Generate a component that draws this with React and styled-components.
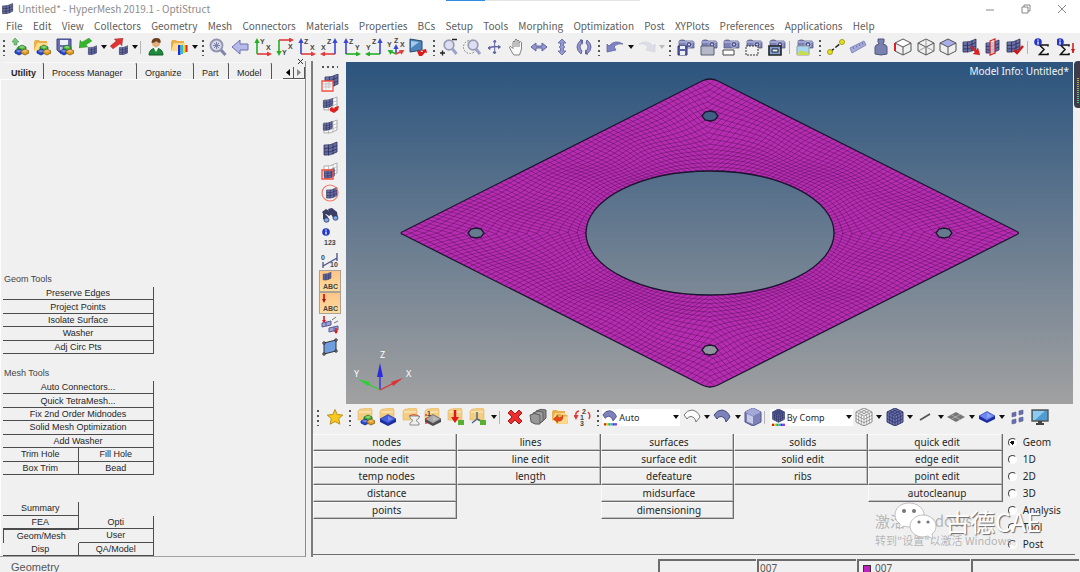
import React from "react";
import styled, { createGlobalStyle, css } from "styled-components";

const ui = '"Noto Sans", "Noto Sans CJK SC", sans-serif';
const windowFont = '"Noto Sans CJK SC", "Noto Sans", sans-serif';
const small = '"Liberation Sans", sans-serif';

const Global = createGlobalStyle`
  *, *::before, *::after { box-sizing: border-box; }
  body { margin: 0; background: #f0f0f0; color: #262626; font-family: ${ui}; font-size: 10px; }
  button, select, input { font: inherit; color: inherit; margin: 0; padding: 0; border: 0; background: none; }
`;

/* ---------- window frame ---------- */

const Window = styled.div`
  min-height: 100vh;
  display: flex;
  flex-direction: column;
  overflow: hidden;
`;
const TitleBar = styled.header`
  position: relative;
  display: flex;
  align-items: center;
  height: 17px;
  padding: 0 9px 0 1px;
  gap: 3px;
  background: #fff;
  color: #8c8c8c;
  font: 10px/17px ${windowFont};
`;
const Title = styled.h1`
  flex: 1;
  margin: 0;
  font: inherit;
`;
const Progress = styled.div`
  position: absolute;
  top: 0;
  left: 41.3%;
  width: 18%;
  height: 1px;
  background: linear-gradient(90deg, #2f8be0 20%, #e4e4e4 20%);
`;
const WindowButtons = styled.div`
  display: flex;
  gap: 18px;
`;
const WindowButton = styled.button`
  width: 18px;
  height: 14px;
  display: grid;
  place-items: center;
`;
const MenuBar = styled.nav`
  display: flex;
  justify-content: space-between;
  height: 16px;
  padding: 0 19% 0 6px;
  background: #fff;
  font: 10px/17px ${windowFont};
`;
const MenuLink = styled.a`
  color: #5c5c5c;
  text-decoration: none;
  white-space: nowrap;
`;

/* ---------- toolbars ---------- */

const TopTools = styled.div`
  display: grid;
  grid-template-columns: 199fr 231fr 166fr 71fr 150fr 261fr;
  height: 28px;
  padding-right: 3px;
`;
const BottomTools = styled.div`
  display: grid;
  grid-template-columns: 32fr 248fr 457fr 29fr;
  height: 26px;
  padding-left: 1px;
`;
const Group = styled.div`
  display: flex;
  align-items: center;
  justify-content: space-between;
  min-width: 0;
`;
const Grip = styled.i`
  width: 8px;
  height: 17px;
  flex: none;
  background: radial-gradient(circle at 4px 2px, #555 1px, transparent 1px) 0 0 / 8px 5px;
`;
const Sep = styled.i`
  width: 5px;
  height: 13px;
  flex: none;
  border-left: 1px solid #b4b4b4;
`;
const ToolButton = styled.button`
  width: 22px;
  height: 22px;
  flex: none;
  display: grid;
  place-items: center;
  ${(p) => p.$on && css`
    background: linear-gradient(#ffc489, #ffdc9c);
    border: 1px solid #a9a294;
  `}
`;
const CaretButton = styled.button`
  width: 8px;
  height: 18px;
  flex: none;
  display: grid;
  place-items: center;
`;
const Combo = styled.label`
  display: flex;
  align-items: center;
  width: ${(p) => p.$w}px;
  height: 17px;
  background: #fff;
  font: 10px/17px ${ui};
`;
const ComboSelect = styled.select`
  flex: 1;
  min-width: 0;
  height: 17px;
  appearance: none;
  font-size: 9px;
`;

/* ---------- work area ---------- */

const Work = styled.div`
  flex: 1;
  display: grid;
  grid-template-columns: 306px minmax(0, 1fr);
  column-gap: 5px;
`;
const Browser = styled.aside`
  display: flex;
  flex-direction: column;
  border-right: 1px solid #8a8a8a;
  border-bottom: 1px solid #a0a0a0;
`;
const TabRow = styled.div`
  position: relative;
  display: flex;
  align-items: flex-end;
  height: 18px;
  padding-left: 3px;
`;
const Tab = styled.button`
  width: ${(p) => p.$w}px;
  height: 17px;
  padding: 2px 0 0 8px;
  border-top: 1px solid #fafafa;
  border-right: 1px solid #555;
  border-top-right-radius: 3px;
  font: ${(p) => (p.$active ? "bold 9px" : "9px")}/16px ${small};
  text-align: left;
  white-space: nowrap;
`;
const TabScroll = styled.div`
  display: flex;
  margin-left: auto;
  align-self: flex-end;
`;
const ScrollButton = styled.button`
  width: 11px;
  height: 12px;
  display: grid;
  place-items: center;
  border-right: 1px solid #555;
  border-bottom: 1px solid #555;
`;
const CloseTab = styled.button`
  position: absolute;
  top: -4px;
  right: 0;
  width: 9px;
  height: 9px;
  display: grid;
  place-items: center;
`;
const TabBody = styled.div`
  flex: 1;
  display: flex;
  flex-direction: column;
  justify-content: flex-end;
  padding: 0 4px 0 2px;
  border-top: 1px solid #fdfdfd;
  border-left: 1px solid #fdfdfd;
`;
const GroupName = styled.h2`
  height: 14px;
  margin: 0 0 0 1px;
  color: #444;
  font: 9px/13px ${small};
`;
const MacroGrid = styled.div`
  display: grid;
  grid-template-columns: 1fr 1fr;
  grid-auto-rows: 1fr;
  width: 151px;
  height: ${(p) => p.$h}px;
  margin-bottom: ${(p) => p.$gap}px;
`;
const Macro = styled.button`
  grid-column: ${(p) => (p.$wide ? "1 / -1" : p.$first ? "1" : "auto")};
  min-height: 0;
  overflow: hidden;
  font: 9px/12px ${small};
  border-right: 1px solid #4c4c4c;
  border-bottom: 1px solid #4c4c4c;
  ${(p) => p.$pressed && css`
    border: 0;
    border-top: 1px solid #4c4c4c;
    border-left: 1px solid #4c4c4c;
  `}
`;

const Stage = styled.main`
  display: flex;
  flex-direction: column;
  min-width: 0;
  border-left: 2px solid #7c7c7c;
`;
const Scene = styled.div`
  position: relative;
  flex: 1;
  display: grid;
  grid-template-columns: 33px minmax(0, 1fr) 7px;
`;
const SideTools = styled.div`
  display: flex;
  flex-direction: column;
  align-items: center;
  padding-top: 4px;
`;
const SideGrip = styled.i`
  width: 17px;
  height: 7px;
  background: radial-gradient(circle at 2px 2px, #555 1px, transparent 1px) 0 0 / 5px 7px;
`;
const Canvas = styled.div`
  position: relative;
  margin-top: 1px;
  background: linear-gradient(#2c547e, #a1a1a1);
`;
const ModelInfo = styled.p`
  position: absolute;
  top: 2px;
  right: 4px;
  margin: 0;
  color: #f2f5f8;
  font: 10px/14px ${ui};
`;
const Drawing = styled.svg`
  display: block;
  width: 100%;
  height: 100%;
`;
const Meter = styled.i`
  position: absolute;
  top: 0;
  right: 0;
  width: 6px;
  height: 47px;
  border: solid #3c3c4a;
  border-width: 17px 1px 4px 3px;
  border-radius: 4px 0 0 4px;
  background: repeating-linear-gradient(transparent 0 1px, #3c3c4a 1px 2px), linear-gradient(#c8b23c, #3cc8a0);
`;

/* ---------- command panel ---------- */

const Panel = styled.section`
  position: relative;
  display: grid;
  grid-template-columns: 144fr 143fr 133fr 134fr 134fr 72fr;
  align-items: start;
  margin: 4px 5px 2px 0;
  padding-bottom: 1px;
  border-bottom: 1px solid #6e6e6e;
`;
const Column = styled.div`
  display: grid;
  grid-auto-rows: 17px;
`;
const Command = styled.button`
  padding-left: 3px;
  border-right: 1px solid #6c6c6c;
  border-bottom: 1px solid #6c6c6c;
  border-left: 1px solid #fafafa;
  box-shadow: inset -1px -1px #c0c0c0, inset 0 1px #fafafa;
  font: 10px/15px ${ui};
`;
const Modes = styled.fieldset`
  display: grid;
  grid-auto-rows: 17px;
  min-width: 0;
  margin: 0;
  padding: 0 0 0 5px;
  border: 0;
`;
const Mode = styled.label`
  display: flex;
  align-items: center;
  gap: 6px;
  font: 10px/15px ${ui};
`;
const Radio = styled.input`
  appearance: none;
  width: 9px;
  height: 9px;
  border-radius: 50%;
  border: 1px solid #fff;
  border-top-color: #444;
  border-left-color: #444;
  background: #fff;
  &:checked { background: radial-gradient(circle, #111 2px, #fff 2px); }
`;
const Watermark = styled.div`
  position: absolute;
  right: 0;
  bottom: 4px;
  width: 200px;
  height: 40px;
  pointer-events: none;
  color: rgba(120, 120, 120, 0.5);
  white-space: nowrap;
`;
const Activate = styled.p`
  margin: 0;
  font: 15px/22px ${windowFont};
`;
const ActivateHint = styled.p`
  margin: 0;
  font: 11px/16px ${windowFont};
`;
const Brand = styled.div`
  position: absolute;
  left: 18px;
  top: -9px;
  display: flex;
  align-items: center;
  gap: 8px;
  color: #fff;
  font: 25px/40px ${windowFont};
  text-shadow: 1px 1px 1px #666;
`;

const StatusBar = styled.footer`
  display: grid;
  grid-template-columns: 658fr 99fr 100fr 114fr 109fr;
  height: 15px;
  padding-top: 2px;
  overflow: hidden;
  color: #555;
`;
const StatusText = styled.span`
  padding-left: 11px;
  font: 11px/17px ${small};
`;
const StatusCell = styled.span`
  display: flex;
  align-items: center;
  gap: 4px;
  padding-left: ${(p) => (p.$chip ? 4 : 1)}px;
  margin-right: 1px;
  border: solid #6c6c6c;
  border-width: 2px 0 0 2px;
  font: 10px/11px ${ui};
`;
const Chip = styled.i`
  width: 8px;
  height: 8px;
  border: 1px solid #333;
  background: #c020c0;
`;

/* ---------- icon pieces ---------- */

const Icon = ({ children, size = 18 }) => (
  <svg width={size} height={size} viewBox="0 0 18 18" aria-hidden="true">{children}</svg>
);
const Caret = ({ faint }) => (
  <svg width="6" height="4" viewBox="0 0 6 4" aria-hidden="true"><path d="M0 0h6L3 4z" fill={faint ? "#bbb" : "#111"} /></svg>
);
const Gem = ({ x, y, c, d }) => (
  <g transform={`translate(${x} ${y})`}>
    <path d="M0-3 4-1V1L0 3-4 1V-1z" fill={c} stroke={d} strokeWidth=".7" />
    <path d="M0-2.6 3.4-1 0 .6-3.4-1z" fill="#fff" opacity=".35" />
  </g>
);
const Trio = () => (
  <>
    <Gem x={11} y={10} c="#3cb832" d="#14600e" />
    <Gem x={8} y={14} c="#2348d8" d="#0a1c70" />
    <Gem x={14} y={14} c="#e09a1c" d="#7c4c06" />
  </>
);
const Folder = () => (
  <>
    <path d="M1 13V4l1-2h4l1 1h7v10z" fill="#e8b04c" />
    <path d="M1 13l3-8h11l-2 8z" fill="#ffd98c" />
  </>
);
const CardFolder = () => (
  <>
    <path d="M1 12V3l2-2h3l1-1h7l1 2v10z" fill="#f3cd82" stroke="#e0b565" strokeWidth=".6" />
    <path d="M2 4h12" stroke="#fff1cc" />
  </>
);
const Patch = ({ x = 0, y = 0, s = 1, ghost, color = "#6a6fa8" }) => (
  <g transform={`translate(${x} ${y}) scale(${s})`}>
    <path d="M2 5q6 1 13-3v10q-7 4-13 3z" fill={ghost ? "#fbfbfb" : color} stroke={ghost ? "#999" : "#2a2e56"} strokeWidth=".8" />
    <path d="M2 8.500q6 1 13-3M2 12q6 1 13-3M6.500 5v10.500M11 4v10.500" fill="none" stroke={ghost ? "#b4b4b4" : "#2a2e56"} strokeWidth=".8" />
  </g>
);
const Arrow = ({ d, c }) => <path d={d} fill={c} stroke="#00000055" strokeWidth=".4" />;
const Camera = () => (
  <>
    <path d="M2 3l2-1h3l1 1h8l1 1v6H2z" fill="#7c82b6" stroke="#4c517c" strokeWidth=".7" />
    <path d="M2 4h15" stroke="#c4c8e8" />
    <circle cx="12" cy="6.500" r="3" fill="#4b5088" stroke="#b9bde0" />
    <circle cx="12" cy="6.500" r="1" fill="#dfe2ff" />
  </>
);
const Head = ({ x, y, r, c }) => <path d="M0-4 2.600 1h-5.200z" transform={`translate(${x} ${y}) rotate(${r})`} fill={c} />;
const Ltr = ({ x, y, children }) => (
  <text x={x} y={y} fontSize="7" fontWeight="bold" fontFamily="Liberation Sans, sans-serif" fill="#444">{children}</text>
);
const AxisPair = ({ ox, oy, hx, vy, hc, vc, h, v, hp, vp }) => (
  <>
    <path d={`M${ox} ${oy}H${hx}`} stroke={hc} strokeWidth="1.600" />
    <path d={`M${ox} ${oy}V${vy}`} stroke={vc} strokeWidth="1.600" />
    <Head x={hx} y={oy} r={hx > ox ? 90 : -90} c={hc} />
    <Head x={ox} y={vy} r={vy > oy ? 180 : 0} c={vc} />
    <Ltr x={hp[0]} y={hp[1]}>{h}</Ltr>
    <Ltr x={vp[0]} y={vp[1]}>{v}</Ltr>
  </>
);
const RED = "#e23b3b";
const GREEN = "#22b022";
const BLUE = "#3a46d8";
const LAV = "#9498d0";
const LAVD = "#6064a0";
const boxTop = "M9 1 17 5 9 9 1 5z";
const Wire = () => <path d="M9 1l8 4v8l-8 4-8-4V5zM1 5l8 4 8-4M9 9v8" fill="none" stroke="#555" strokeWidth="1" />;
const GridCube = ({ c, l }) => (
  <>
    <path d="M9 0l8 4v10l-8 4-8-4V4z" fill={c} stroke={l} strokeWidth=".9" />
    <path d="M1 4l8 4 8-4M9 8v10M1 7.300l8 4 8-4M1 10.600l8 4 8-4M3.700 5.400v10M6.300 6.700v10M11.700 6.700v10M14.300 5.400v10M3.700 2.700l8 4M6.300 1.300l8 4M14.300 2.700l-8 4M11.700 1.300l-8 4" fill="none" stroke={l} strokeWidth=".7" />
  </>
);
const Slab = ({ y = 0, c = "#4460e0", side = "#1c2c9c" }) => (
  <g transform={`translate(0 ${y})`}>
    <path d="M1 9v3l8 4 8-4V9z" fill={side} />
    <path d="M9 4.500 17 9l-8 4.500L1 9z" fill={c} stroke={side} strokeWidth=".6" />
    <path d="M9 6 14 9l-5 2z" fill="#fff" opacity=".25" />
  </g>
);
const Info = ({ x = 5, y = 4 }) => (
  <>
    <circle cx={x} cy={y} r="3.800" fill="#2636c4" />
    <path d={`M${x} ${y - 2.5}v1.200M${x} ${y - 0.5}v3`} stroke="#fff" strokeWidth="1.300" />
  </>
);
const Spectrum = ({ y }) => (
  <>
    {["#e02020", "#e8c020", "#28b828", "#20b8d0", "#2838e0", "#b028c8"].map((c, i) => (
      <rect key={c} x={2 + i * 2.3} y={y} width="2.300" height="2.500" fill={c} />
    ))}
  </>
);
const Sigma = () => <path d="M14 8.500V7H5.500l4.500 4.500L5.500 16.500H14V15" fill="none" stroke="#111" strokeWidth="1.500" />;
const Curve = ({ c = "#7c82ba", l = "#444a7a" }) => (
  <path d="M1 7q3-5 8-5 6 1 8 7l-4 5q-1-5-5-5.500-3 0-4 2.500z" fill={c} stroke={l} strokeWidth="1" />
);

const icons = {
  new: <><path d="M6 2v7h6V3z" fill="#fff" /><path d="M3 7V4H1l3-4 4 4H6v3zM6 10l3-2v5H4z" fill="#7bc47b" stroke="#3f9a3f" strokeWidth=".6" /><Trio /></>,
  open: <><Folder /><Trio /></>,
  save: <><path d="M1 1h14v13H3l-2-2z" fill="#6a6fb0" stroke="#3d4280" /><rect x="4" y="2" width="8" height="5" fill="#eceefb" /><rect x="4" y="9" width="8" height="4" fill="#c3c7e6" /><Trio /></>,
  import: <><Patch x={8} y={6} s={0.7} /><Arrow c="#35b52c" d="M0 10l1-8 2 2 7-4 3 3-6 4 2 2z" /></>,
  export: <><Patch x={8} y={6} s={0.7} /><Arrow c="#e03434" d="M13 0L12 8 10 6 3 11 0 8l6-5-2-2z" /></>,
  user: <><path d="M2 17q0-6 7-7 7 1 7 7z" fill="#1f8a3c" stroke="#0d5a22" /><path d="M6.500 9.500 9 14l2.500-4.500z" fill="#fff" /><circle cx="9" cy="5" r="4" fill="#e2ae7c" /><path d="M4.500 5q0-5 5-5t4 5q-3 0-4-2-2 2-5 2z" fill="#6b4020" /></>,
  results: <><Folder /><rect x="8" y="7" width="2.500" height="10" fill="#2030d0" /><rect x="10.500" y="7" width="2.500" height="9" fill="#28c0d0" /><rect x="13" y="7" width="2.500" height="8" fill="#f0d020" /><rect x="15.500" y="7" width="2" height="7" fill="#e02020" /></>,
  fit: <><circle cx="7.500" cy="7.500" r="6" fill="#d6d8ec" stroke="#9194ae" strokeWidth="1.800" /><path d="M12 12l4.500 5" stroke="#8084a8" strokeWidth="3" /><path d="M7.500 4v7M4 7.500h7M5 5l5 5M10 5l-5 5" stroke="#7e82a4" /></>,
  back: <path d="M1 9l8-7v4h8v6H9v4z" fill="#b6baea" stroke="#6c70aa" />,
  xy: <AxisPair ox={3} oy={16} hx={14} vy={4} hc={RED} vc={GREEN} h="X" v="Y" hp={[12, 12]} vp={[6, 6]} />,
  xyFlip: <AxisPair ox={3} oy={2} hx={14} vy={14} hc={RED} vc={GREEN} h="X" v="Y" hp={[12, 11]} vp={[6, 17]} />,
  xz: <AxisPair ox={3} oy={16} hx={14} vy={4} hc={RED} vc={BLUE} h="X" v="Z" hp={[12, 12]} vp={[6, 6]} />,
  xzFlip: <AxisPair ox={15} oy={16} hx={4} vy={4} hc={RED} vc={BLUE} h="X" v="Z" hp={[1, 12]} vp={[7, 6]} />,
  yz: <AxisPair ox={3} oy={16} hx={14} vy={4} hc={GREEN} vc={BLUE} h="Y" v="Z" hp={[12, 12]} vp={[6, 6]} />,
  yzFlip: <AxisPair ox={15} oy={16} hx={4} vy={4} hc={GREEN} vc={BLUE} h="Y" v="Z" hp={[1, 12]} vp={[7, 6]} />,
  iso: <><path d="M9 15V8" stroke={BLUE} strokeWidth="1.600" /><path d="M9 16l-6-3" stroke={GREEN} strokeWidth="1.600" /><path d="M9 16l6-3" stroke={RED} strokeWidth="1.600" /><Head x={9} y={10} r={0} c={BLUE} /><Head x={4} y={14} r={-60} c={GREEN} /><Head x={14} y={14} r={60} c={RED} /><Ltr x={0} y={9}>Y</Ltr><Ltr x={7} y={5}>Z</Ltr><Ltr x={13} y={9}>X</Ltr></>,
  view: <><path d="M1 1l12 2v9L1 14z" fill="#4c84bc" stroke="#2a4a70" /><path d="M2 3l8 1-8 6z" fill="#a4cbea" /><path d="M8 13l3-1 1 2h2l-1-2 4-1 1 4-2-.500-3 3.500h-3z" fill="#e01818" /></>,
  zoom: <><circle cx="9" cy="7" r="4.800" fill="#dcdef2" stroke="#9a9db6" strokeWidth="1.800" /><path d="M12.500 11l4 5" stroke="#9ea2c8" strokeWidth="3" /><path d="M12 1.500h5M0 15h5M2.500 12.500v5" stroke="#222" strokeWidth="1.400" /></>,
  zoomArea: <><circle cx="7" cy="9" r="6.500" fill="none" stroke="#777" strokeDasharray="1.500 1.500" /><circle cx="10" cy="7" r="4.800" fill="#dcdef2" stroke="#9a9db6" strokeWidth="1.800" /><path d="M13 11l4 5" stroke="#9ea2c8" strokeWidth="3" /></>,
  rotate: <path d="M9.700 2v14M3 10q6-3 12-1M9.700 2 8.500 4h2.500zM9.500 16l-1.500-2H11zM3 10l2-1.500v3zM15.500 9l-2-1.500v3z" fill={LAVD} stroke={LAVD} strokeWidth="1" />,
  hand: <path d="M5 16 1.500 9.500q0-2 2-.5L5 10.500V4q1-2 2 0V2q1-2 2 0v1q1-2 2 0v1.500q1.500-2 2.500 0V11l-2 6H6z M7 4v5M9 3v6M11 4v5" fill="#fafafa" stroke="#777" strokeWidth=".9" />,
  leftRight: <path d="M1 9l5-4v3h6V5l5 4-5 4v-3H6v3z" fill={LAV} stroke={LAVD} />,
  upDown: <path d="M9 1l4 4h-2.500v3L12 9l-1.500 1v3H13l-4 4-4-4h2.500v-3L6 9l1.500-1V5H5z" fill={LAV} stroke={LAVD} strokeWidth=".8" />,
  spin: <><path d="M6 2q-8 7 0 14l1-3q-4-4 0-8zM12 2q8 7 0 14l-1-3q4-4 0-8z" fill={LAV} stroke={LAVD} /><path d="M5 1l3 1v5zM13 17l-3-1v-5z" fill={LAVD} /></>,
  undo: <path d="M1 14V6l2 2q6-7 14-2-6-1-9 3l2 3z" fill="#7d83c4" stroke={LAVD} strokeWidth=".8" />,
  redo: <path d="M17 14V6l-2 2Q9 1 1 6q6-1 9 3l-2 3z" fill="#dcdde6" stroke="#d3d4de" strokeWidth=".8" />,
  camSave: <><Camera /><path d="M1 8h9v9H1z" fill="#5a5fa4" stroke="#33386c" /><path d="M3 8h5v3H3zM3 13h5v4H3z" fill="#eceefb" /></>,
  camPage: <><Camera /><path d="M1 8h13v9H1z" fill="#b4b8c8" stroke="#5a5e72" /></>,
  camBar: <><Camera /><path d="M1 12h11v5H1z" fill="#fff" stroke="#444" /></>,
  camArea: <><Camera /><path d="M1 8h12v9H1z" fill="#f2f2f2" stroke="#333" strokeDasharray="2 1" /></>,
  camWin: <><Camera /><path d="M1 8h12v9H1z" fill="#80a0d0" stroke="#222" strokeWidth="1.600" /><path d="M4 11h6v3H4z" fill="#e6efff" stroke="#223" /></>,
  camPhoto: <><Camera /><path d="M1 8h12v9H1z" fill="#a4d8f4" stroke="#999" /><path d="M1 16l4-4 3 2 2-1 3 3v1H1z" fill="#c8dc50" /></>,
  distance: <><path d="M3 14 15 4" stroke="#222" strokeWidth="1.500" strokeDasharray="5 2" /><circle cx="3" cy="14" r="2.500" fill="#e6e020" stroke="#a49e20" /><circle cx="15" cy="4" r="2.500" fill="#e6e020" stroke="#a49e20" /></>,
  ruler: <><path d="M1 10 15 3l2 4L3 15z" fill="#a7abd8" stroke="#8589bc" /><path d="M4 9l1 2M7 7.500l1 2M10 6l1 2M13 4.500l1 2" stroke="#6b70b0" /></>,
  mass: <path d="M6 1h6v3l-1 2q4 1 4 3v7q-6 2-12 0V9q0-2 4-3L6 4z" fill="#7a80b0" stroke="#50557c" />,
  boxRed: <><path d={boxTop} fill="#fff" /><Wire /><path d="M1 5v8" stroke="#e02020" strokeWidth="2" /></>,
  boxWire: <><Wire /><path d="M1 13l8-4 8 4M9 1v8" stroke="#888" fill="none" strokeWidth=".8" /></>,
  boxTop: <><path d={boxTop} fill="#a9aeea" /><Wire /></>,
  meshArrow: <><Patch x={-1} y={-1} /><Arrow c="#e02020" d="M8 9l2-1 4 4 2-2 2 7-7-1 2-2z" /></>,
  meshMirror: <><Patch /><path d="M6 3l5-2v14l-5 2z" fill="#fff9" stroke="#e02020" strokeWidth="1.200" /></>,
  meshCheck: <><Patch x={-1} y={-1} /><path d="M8 12l3 3 6-7" fill="none" stroke="#d01818" strokeWidth="2.500" /></>,
  sigma: <><Sigma /><Info x={4} /></>,
  sigmaLoad: <><g transform="translate(-2 0)"><Sigma /></g><Info x={3} /><path d="M16 5v10" stroke="#d01818" strokeWidth="1.500" /><path d="M14 11h4l-2 4z" fill="#d01818" /></>,
  star: <path d="M9 1.500l2.200 5 5.500.6-4 3.600 1.200 5.500L9 13.500l-4.900 2.700 1.200-5.500-4-3.600 5.500-.6z" fill="#f8c81c" stroke="#b8901c" />,
  comp: <><CardFolder /><Trio /></>,
  prop: <><CardFolder /><Slab y={2} /></>,
  material: <><CardFolder /><path d="M7 8q6-3 11 1" stroke={RED} fill="none" /><path d="M8 8h9v2l-3 2.500 3 2.500v2H8v-2l3-2.500L8 10z" fill="#eee" stroke="#777" strokeWidth=".8" /></>,
  loadstep: <><CardFolder /><Slab y={2} c="#a8a8a8" side="#4c4c4c" /><path d="M2 6v10" stroke={RED} strokeWidth="1.500" strokeDasharray="2 2" /><Ltr x={3} y={8}>1</Ltr></>,
  load: <><CardFolder /><path d="M8 2v11" stroke="#e01818" strokeWidth="2.500" /><path d="M4 9h8l-4 6z" fill="#e01818" /><rect x="11" y="12" width="6" height="5" fill="#58b030" /></>,
  system: <><CardFolder /><path d="M8 4v7l-5 4M8 11l6 3" stroke="#4a6888" strokeWidth="1.500" fill="none" /><rect x="11" y="12" width="6" height="5" fill="#58b030" /></>,
  delete: <path d="M2 5l3-3 4 4 4-4 3 3-4 4 4 4-3 3-4-4-4 4-3-3 4-4z" fill="#e83030" stroke="#b01818" />,
  cards: <><path d="M7 3q5-3 10-1v8l-4 4H7z" fill="#8a8a8a" stroke="#5e5e5e" /><path d="M4 5q5-3 10-1v9l-3 2H4z" fill="#a0a0a0" stroke="#5e5e5e" /><path d="M1 7q5-3 10 0v9q-5 1-9-2z" fill="#989898" stroke="#5e5e5e" /></>,
  organize: <><Folder /><g transform="translate(4 4) scale(.9)"><Folder /></g><Arrow c="#e84818" d="M12 7v3q-1 4-5 3v2l-5-4 5-4v2q3 1 5-2z" /></>,
  renumber: <><Ltr x={8} y={6}>2</Ltr><Ltr x={6} y={12}>1</Ltr><Ltr x={6} y={18}>3</Ltr><path d="M5 3q-4 1-3 5M14 4q3 3 1 7" stroke={RED} fill="none" strokeWidth="1.500" /><Head x={2} y={8} r={180} c={RED} /></>,
  auto: <><g transform="scale(.9)"><Curve /></g><Spectrum y={15} /></>,
  surfWire: <Curve c="#fbfbfb" l="#777" />,
  surfShade: <Curve />,
  solidShade: <><path d="M9 0l8 4v10l-8 4-8-4V4z" fill="#7c82b8" stroke="#50558c" /><path d="M9 0l8 4-8 4-8-4z" fill="#a4a8d8" /><path d="M3 6l6 2.500V16l-6-2.500z" fill="#c8cbe8" /></>,
  byComp: <><g transform="translate(2 0) scale(.78)"><GridCube c="#626aa8" l="#252a58" /></g><Spectrum y={15.5} /></>,
  cubeWire: <GridCube c="#fafafa" l="#808080" />,
  cubeShade: <GridCube c="#6e76b4" l="#2a2f60" />,
  line: <path d="M4 12 14 6" stroke="#555" strokeWidth="1.800" />,
  plate: <><path d="M9 4l9 5-9 5-9-5z" fill="#777" /><path d="M4 6.500l9 5M13 6.500l-9 5" stroke="#aaa" /></>,
  slab: <Slab y={-1} c="#6c86f4" />,
  shrink: <path d="M3 5l4-1v4l-4 1zM10 3l4-1v4l-4 1zM3 12l4-1v4l-4 1zM10 10l4-1v4l-4 1z" fill="#6a6fae" stroke="#565b94" strokeWidth=".6" />,
  monitor: <><path d="M1 2h16v11H1z" fill="#4e9cd0" stroke="#555" strokeWidth="1.400" /><path d="M2 3h12L4 12H2z" fill="#8ccaf0" /><path d="M7 13h4v2h2v2H5v-2h2z" fill="#444" /></>,
  maskArea: <><Patch x={2} y={-2} /><path d="M1 7h11v10H1z" fill="#fffd" stroke="#f05040" strokeWidth="1.300" /><path d="M2 10h8M2 13h8M5 9v7M8 8v7" stroke="#bbb" strokeWidth=".7" /></>,
  maskSwap: <><Patch ghost x={1} y={-1} /><Patch x={1} y={1} s={0.7} /><path d="M9 12l2-1 2 2 1-2 4-1-1 4-4 3-4-2z" fill="#e02020" /></>,
  maskPart: <><Patch ghost x={1} /><Patch x={1} y={2} s={0.68} /></>,
  maskAll: <Patch x={1} />,
  maskIn: <><Patch ghost x={1} y={-1} /><Patch x={2} y={5} s={0.75} /><path d="M1 8h11v9H1z" fill="none" stroke="#f05040" strokeWidth="1.400" /></>,
  maskRound: <><Patch x={4} y={2} s={0.8} /><circle cx="9" cy="9" r="8" fill="none" stroke="#f07868" strokeWidth="1.200" /></>,
  find: <><path d="M1 6l4-3 5 3 1 2-3 2-3-2-2 1zM7 3l4-1 5 4 1 6-4 1-4-6zM2 6l5 5-1 4-4-2z" fill="#3b3f66" /><ellipse cx="5.500" cy="14" rx="2.500" ry="2.200" fill="#7aaef0" stroke="#2b2f56" strokeWidth=".8" /><ellipse cx="14.500" cy="12" rx="2.500" ry="2.200" fill="#7aaef0" stroke="#2b2f56" strokeWidth=".8" /></>,
  numbers: <><Info x={5} y={4} /><Ltr x={3} y={17}>123</Ltr></>,
  scale: <><path d="M2 16 16 8M2 12v6M16 3v8" stroke="#4b5088" strokeWidth="1.300" /><Ltr x={0} y={10}>0</Ltr><Ltr x={9} y={17}>10</Ltr></>,
  labelElem: <><Patch x={1} y={-1} s={0.6} /><Ltr x={2} y={17}>ABC</Ltr></>,
  labelLoad: <><path d="M3 0v7" stroke="#e01818" strokeWidth="1.800" /><path d="M1 5h4L3 9z" fill="#a01010" /><Ltr x={2} y={17}>ABC</Ltr></>,
  loads: <><path d="M1 7l9-2v4l-9 2zM8 12l9-2v4l-9 2zM5 6v4M13 11v4" fill="#a0a4d4" stroke="#565b96" /><path d="M3 0v5M15 12v5" stroke="#e01818" strokeWidth="1.600" /><path d="M1 4h4L3 7zM13 15h4l-2 3z" fill="#e01818" /><path d="M11 4l4-3M13 7l4-2" stroke="#777" /></>,
  quad: <><path d="M3 5l12-3v11L3 16z" fill="#6f9ee0" stroke="#333" /><path d="M2 4h2v2H2zM14 1h2v2h-2zM14 12h2v2h-2zM2 15h2v2H2z" fill="#fff" stroke="#222" /></>,
  app: <Patch color="#6a6f9c" />,
};

/* Codes: "|" separator, "v" caret, "x" disabled caret, anything else an icon. */
const Tools = ({ items }) => (
  <Group>
    <Grip />
    {items.map((it, i) => {
      if (it === "|") return <Sep key={i} />;
      if (it === "v" || it === "x") return <CaretButton key={i} aria-label="More"><Caret faint={it === "x"} /></CaretButton>;
      if (typeof it !== "string") return <React.Fragment key={i}>{it}</React.Fragment>;
      return <ToolButton key={i} aria-label={it}><Icon>{icons[it]}</Icon></ToolButton>;
    })}
  </Group>
);
const Picker = ({ icon, value, width, label }) => (
  <Combo $w={width}>
    <Icon size={17}>{icons[icon]}</Icon>
    <ComboSelect aria-label={label} defaultValue={value}><option>{value}</option></ComboSelect>
    <CaretButton as="span"><Caret /></CaretButton>
  </Combo>
);

const menus = ["File", "Edit", "View", "Collectors", "Geometry", "Mesh", "Connectors", "Materials", "Properties", "BCs", "Setup", "Tools", "Morphing", "Optimization", "Post", "XYPlots", "Preferences", "Applications", "Help"];
const topGroups = [
  ["new", "open", "save", "import", "v", "export", "v", "|", "user", "results", "v"],
  ["fit", "back", "xy", "xyFlip", "xz", "xzFlip", "yz", "yzFlip", "iso", "view"],
  ["zoom", "zoomArea", "rotate", "hand", "leftRight", "upDown", "spin"],
  ["undo", "v", "redo", "x"],
  ["camSave", "camPage", "camBar", "camArea", "camWin", "|", "camPhoto"],
  ["distance", "ruler", "mass", "boxRed", "boxWire", "boxTop", "meshArrow", "meshMirror", "meshCheck", "|", "sigma", "sigmaLoad"],
];
const bottomGroups = [
  ["star"],
  ["comp", "prop", "material", "loadstep", "load", "system", "v", "|", "delete", "cards", "organize", "renumber"],
  [
    <Picker icon="auto" value="Auto" width={78} label="Colour mode" />,
    "surfWire", "v", "surfShade", "v", "solidShade", "|",
    <Picker icon="byComp" value="By Comp" width={83} label="Element colour" />,
    "cubeWire", "v", "cubeShade", "v", "line", "v", "plate", "v", "slab", "v", "shrink", "monitor",
  ],
];
const side = ["maskArea", "maskSwap", "maskPart", "maskAll", "maskIn", "maskRound", "find", "numbers", "scale", "labelElem", "labelLoad", "loads", "quad"];
const tabs = [["Utility", 41], ["Process Manager", 93], ["Organize", 57], ["Part", 35], ["Model", 43]];
const commands = [
  ["nodes", "node edit", "temp nodes", "distance", "points"],
  ["lines", "line edit", "length"],
  ["surfaces", "surface edit", "defeature", "midsurface", "dimensioning"],
  ["solids", "solid edit", "ribs"],
  ["quick edit", "edge edit", "point edit", "autocleanup"],
];
const modes = ["Geom", "1D", "2D", "3D", "Analysis", "Tool", "Post"];

/* ---------- meshed plate ---------- */

const CELLS = 34;
const INNER = 17;
const RADIUS = 0.566;
const CX = 364;
const CY = 171;

// Square grid outside an inner square, bent so the inner square becomes the round hole.
const bend = (i, j) => {
  const a = i / CELLS;
  const b = j / CELLS;
  const m = Math.max(Math.abs(a), Math.abs(b));
  const m0 = INNER / CELLS;
  const w = Math.pow((1 - m) / (1 - m0), 1.3);
  const alongA = Math.abs(a) >= Math.abs(b);
  const t = ((alongA ? b / a : a / b) * Math.PI) / 4;
  const r = RADIUS + (m - m0) * 0.9;
  const s = alongA ? Math.sign(a) : Math.sign(b);
  const main = s * r * Math.cos(t);
  const cross = s * r * Math.sin(t);
  // A slow ripple between the hole and the rim, as a free mesher leaves.
  const ripple = Math.sin(Math.PI * (m - m0) / (1 - m0)) * 0.014;
  const pa = a * (1 - w) + (alongA ? main : cross) * w + ripple * Math.sin(b * 13 + a * 4);
  const pb = b * (1 - w) + (alongA ? cross : main) * w + ripple * Math.sin(a * 11 - b * 5);
  return [CX + (pa - pb) * 155, CY + (pa + pb) * 77.5];
};
const meshPath = () => {
  let d = "";
  const trace = (at) => {
    let pen = false;
    for (let k = -CELLS; k <= CELLS; k++) {
      const [i, j] = at(k);
      if (Math.max(Math.abs(i), Math.abs(j)) < INNER) { pen = false; continue; }
      const [x, y] = bend(i, j);
      d += `${pen ? "L" : "M"}${x.toFixed(1)} ${y.toFixed(1)}`;
      pen = true;
    }
  };
  for (let n = -CELLS + 1; n < CELLS; n++) {
    trace((k) => [n, k]);
    trace((k) => [k, n]);
  }
  return d;
};
const plate = "M58 169 356 19Q364 15 372 19L670 169Q675 171 670 173L372 323Q364 327 356 323L58 173Q52 171 58 169z";
const bore = "M240 171a124 62 0 1 0 248 0a124 62 0 1 0-248 0z";
const hole = (x, y) => `M${x - 8} ${y}l3-4 5-1 5 1 3 4-3 4-5 1-5-1z`;
const holes = [hole(364, 54), hole(130, 171), hole(598, 171), hole(364, 288)].join("");
const mesh = meshPath();

const Model = () => (
  <Drawing viewBox="0 0 727 342" role="img" aria-label="Meshed plate with five holes">
    <defs>
      <clipPath id="plate"><path clipRule="evenodd" d={plate + bore + holes} /></clipPath>
    </defs>
    <g clipPath="url(#plate)">
      <path d={plate} fill="#b62db1" />
      <path d={mesh} fill="none" stroke="#3c0a42" strokeWidth=".6" opacity=".62" />
    </g>
    <path d={plate + bore + holes} fill="none" stroke="#1c1430" strokeWidth="1.300" />
    <g strokeWidth="1.300">
      <path d="M34 328V314" stroke="#2a2ae0" />
      <path d="M34 301l3 14h-6z" fill="#2a2ae0" />
      <path d="M34 328 22 322" stroke="#30d030" />
      <path d="M12 317l12 3-2 4z" fill="#30d030" />
      <path d="M34 328 46 322" stroke="#e03030" />
      <path d="M57 316l-12 4 2 4z" fill="#e03030" />
    </g>
    <g fill="#fff" fontSize="9" fontFamily="Noto Sans, sans-serif">
      <text x="34" y="296">Z</text>
      <text x="8" y="315">Y</text>
      <text x="60" y="315">X</text>
    </g>
  </Drawing>
);

const WeChat = () => (
  <svg width="44" height="40" viewBox="0 0 44 40" aria-hidden="true">
    <g fill="#fff" stroke="#999" strokeWidth=".6">
      <path d="M16 2C7 2 2 8 2 14c0 4 2 7 5 9l-1 5 5-3q3 1 6 1c8 0 14-5 14-12S24 2 16 2z" />
      <path d="M30 14c-7 0-13 5-13 11s6 11 13 11l5-1 5 3-1-5c3-2 4-5 4-8 0-6-6-11-13-11z" />
    </g>
    <g fill="#777"><circle cx="11" cy="10" r="2" /><circle cx="21" cy="10" r="2" /><circle cx="26" cy="21" r="1.600" /><circle cx="35" cy="21" r="1.600" /></g>
  </svg>
);

export default function App() {
  return (
    <Window>
      <Global />
      <TitleBar>
        <Progress />
        <Icon size={14}>{icons.app}</Icon>
        <Title>Untitled* - HyperMesh 2019.1 - OptiStruct</Title>
        <WindowButtons>
          {["M1 6h8", "M1 3h6v6H1zM3 3V1h6v6H7", "M1 1l8 8M9 1 1 9"].map((d, i) => (
            <WindowButton key={d} aria-label={["Minimize", "Restore", "Close"][i]}>
              <svg width="10" height="10"><path d={d} fill="none" stroke="#888" /></svg>
            </WindowButton>
          ))}
        </WindowButtons>
      </TitleBar>
      <MenuBar>{menus.map((m) => <MenuLink key={m} href="#">{m}</MenuLink>)}</MenuBar>
      <TopTools>{topGroups.map((g, i) => <Tools key={i} items={g} />)}</TopTools>

      <Work>
        <Browser>
          <TabRow>
            {tabs.map(([t, w], i) => <Tab key={t} $w={w} $active={i === 0}>{t}</Tab>)}
            <TabScroll>
              <ScrollButton aria-label="Scroll left"><svg width="4" height="7"><path d="M4 0v7L0 3.500z" /></svg></ScrollButton>
              <ScrollButton aria-label="Scroll right"><svg width="4" height="7"><path d="M0 0v7l4-3.500z" fill="#888" /></svg></ScrollButton>
            </TabScroll>
            <CloseTab aria-label="Close tab"><svg width="7" height="7"><path d="M1 1l5 5M6 1 1 6" stroke="#333" /></svg></CloseTab>
          </TabRow>
          <TabBody>
            <GroupName>Geom Tools</GroupName>
            <MacroGrid $h={67} $gap={13}>
              {["Preserve Edges", "Project Points", "Isolate Surface", "Washer", "Adj Circ Pts"].map((t) => <Macro key={t} $wide>{t}</Macro>)}
            </MacroGrid>
            <GroupName>Mesh Tools</GroupName>
            <MacroGrid $h={94} $gap={27}>
              {["Auto Connectors...", "Quick TetraMesh...", "Fix 2nd Order Midnodes", "Solid Mesh Optimization", "Add Washer"].map((t) => <Macro key={t} $wide>{t}</Macro>)}
              {["Trim Hole", "Fill Hole", "Box Trim", "Bead"].map((t) => <Macro key={t}>{t}</Macro>)}
            </MacroGrid>
            <MacroGrid $h={54} $gap={0}>
              <Macro>Summary</Macro>
              <Macro $first>FEA</Macro>
              <Macro>Opti</Macro>
              <Macro $pressed>Geom/Mesh</Macro>
              <Macro>User</Macro>
              <Macro>Disp</Macro>
              <Macro>QA/Model</Macro>
            </MacroGrid>
          </TabBody>
        </Browser>

        <Stage>
          <Scene>
            <SideTools>
              <SideGrip />
              {side.map((s) => (
                <ToolButton key={s} aria-label={s} $on={s.startsWith("label")}><Icon>{icons[s]}</Icon></ToolButton>
              ))}
            </SideTools>
            <Canvas>
              <Model />
              <ModelInfo>Model Info: Untitled*</ModelInfo>
            </Canvas>
            <Meter />
          </Scene>
          <BottomTools>{bottomGroups.map((g, i) => <Tools key={i} items={g} />)}</BottomTools>
          <Panel>
            {commands.map((col) => (
              <Column key={col[0]}>{col.map((c) => <Command key={c}>{c}</Command>)}</Column>
            ))}
            <Modes>
              {modes.map((m, i) => (
                <Mode key={m}><Radio type="radio" name="mode" defaultChecked={i === 0} />{m}</Mode>
              ))}
            </Modes>
            <Watermark>
              <Activate>激活 Windows</Activate>
              <ActivateHint>转到"设置"以激活 Windows。</ActivateHint>
              <Brand><WeChat />古德CAE</Brand>
            </Watermark>
          </Panel>
        </Stage>
      </Work>

      <StatusBar>
        <StatusText>Geometry</StatusText>
        <StatusCell />
        <StatusCell>007</StatusCell>
        <StatusCell $chip><Chip />007</StatusCell>
        <StatusCell />
      </StatusBar>
    </Window>
  );
}
